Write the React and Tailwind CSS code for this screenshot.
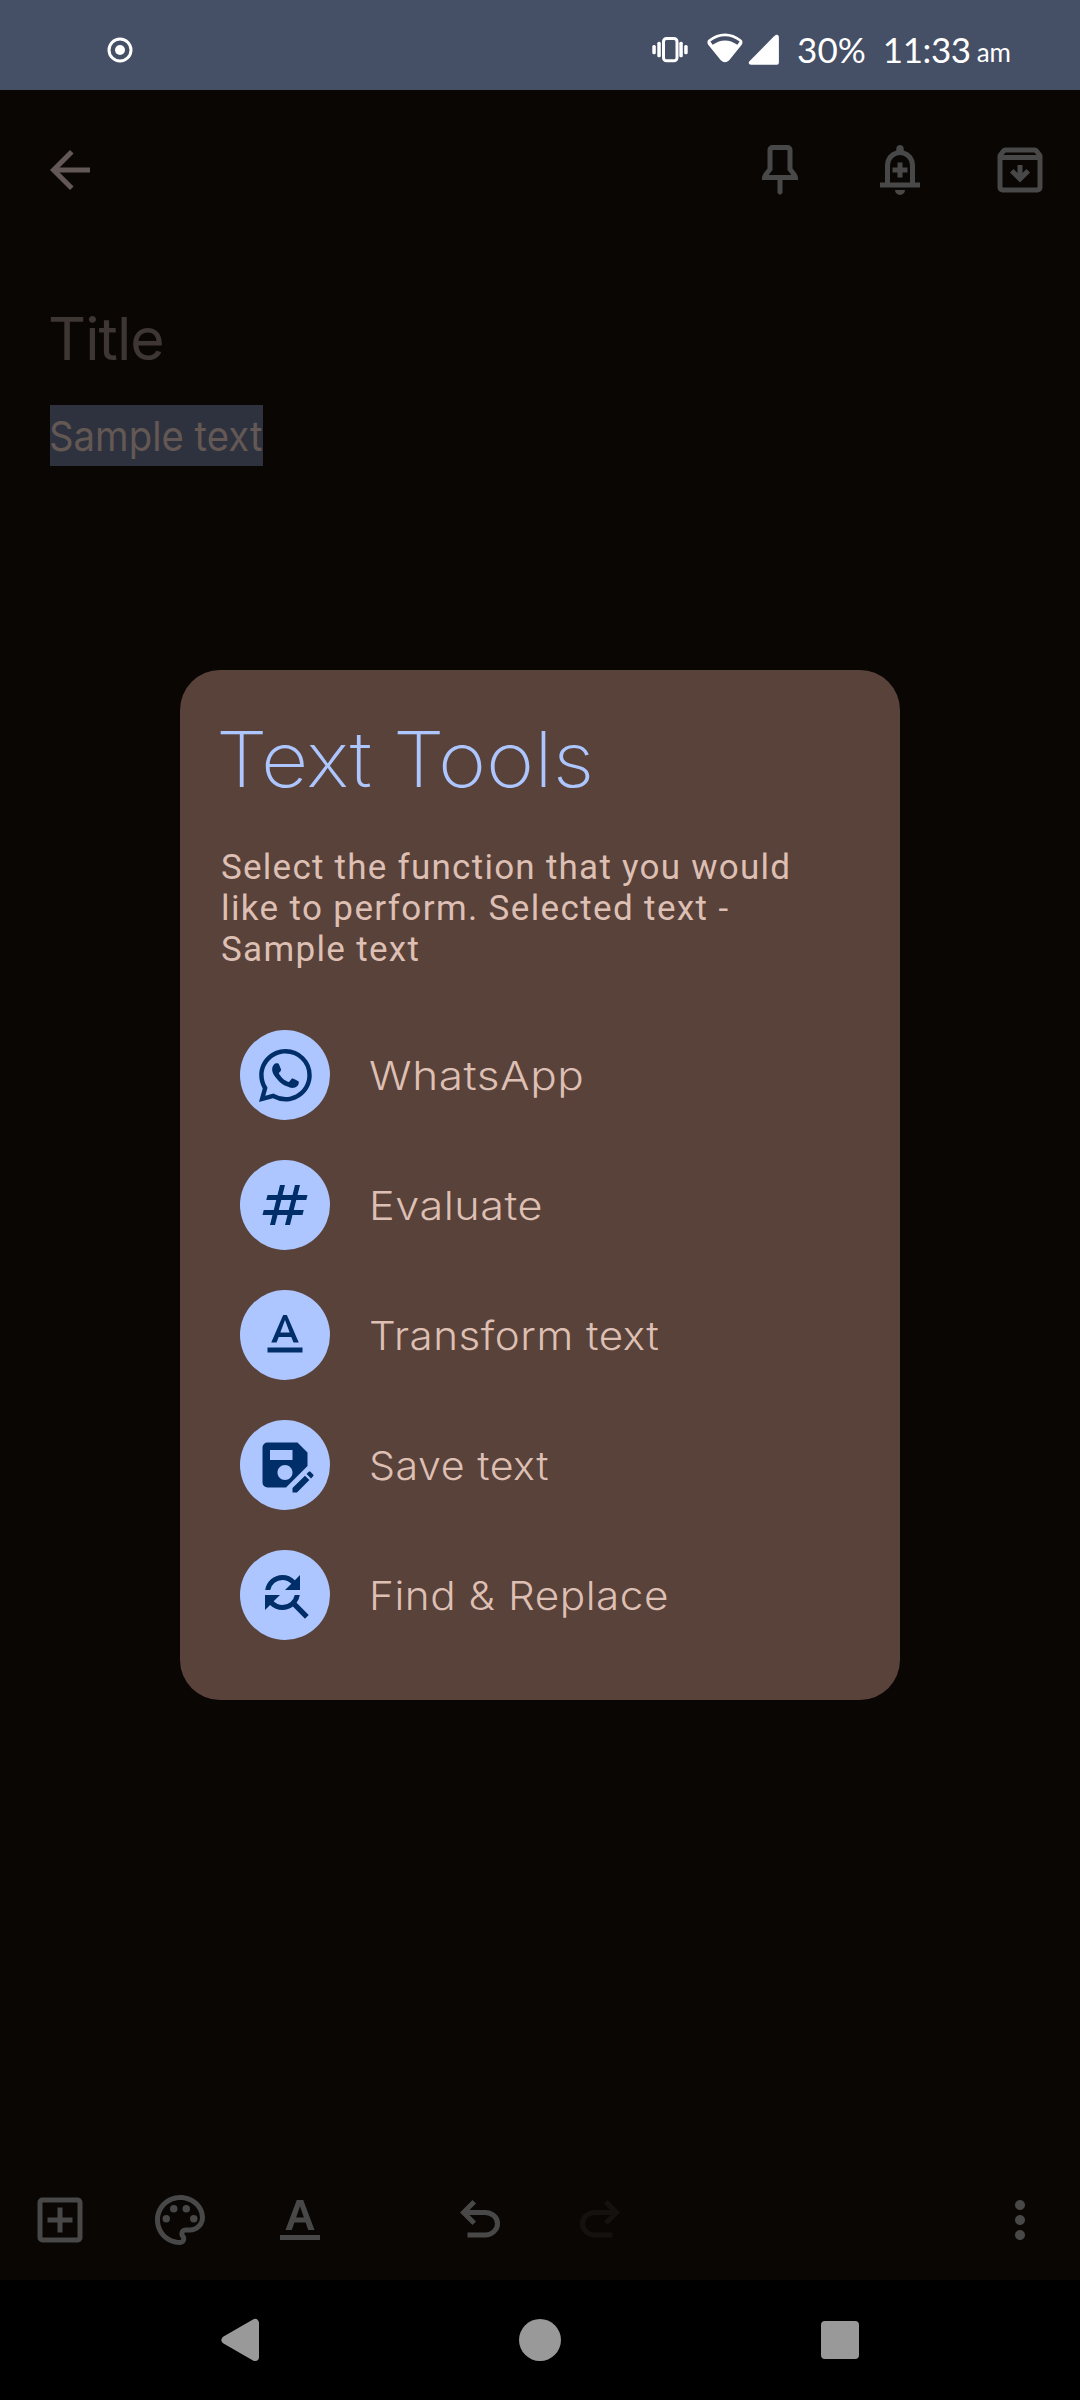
import React from 'react';
import { MdFindReplace, MdMoreVert, MdNumbers, MdOutlineAddBox, MdOutlinePalette, MdSaveAs, MdTextFormat } from 'react-icons/md';
import { BsWhatsapp } from 'react-icons/bs';

const PATHS = {
  back: 'm313-440 224 224-57 56-320-320 320-320 57 56-224 224h487v80H313Z',
  bell: 'M480-80q-33 0-56.5-23.5T400-160h160q0 33-23.5 56.5T480-80ZM160-200v-80h80v-280q0-83 50-147.5T420-792v-28q0-25 17.5-42.5T480-880q25 0 42.5 17.5T540-820v28q80 20 130 84.5T720-560v280h80v80H160Zm160-80h320v-280q0-66-47-113t-113-47q-66 0-113 47t-47 113v280Zm120-80h80v-80h80v-80h-80v-80h-80v80h-80v80h80v80Z',
  archive: 'm480-280 160-160-56-56-64 64v-128h-80v128l-64-64-56 56 160 160ZM200-640v440h560v-440H200Zm0 520q-33 0-56.5-23.5T120-200v-499q0-14 4.5-27t13.5-24l50-61q11-14 27.5-21.5T250-840h460q18 0 34.5 7.5T772-811l50 61q9 11 13.5 24t4.5 27v499q0 33-23.5 56.5T760-120H200Zm16-600h528l-34-40H250l-34 40Z',
  undo: 'M280-200v-80h284q63 0 109.5-40T720-420q0-60-46.5-100T564-560H312l104 104-56 56-200-200 200-200 56 56-104 104h252q97 0 169.5 63T800-420q0 94-72.5 157T564-200H280Z',
};

function Symbol({ name, className = '' }) {
  return (
    <svg viewBox="0 -960 960 960" fill="currentColor" className={`size-[60px] shrink-0 ${className}`}>
      <path d={PATHS[name]} />
    </svg>
  );
}

function PinIcon() {
  return (
    <svg viewBox="0 0 24 24" className="size-[60px] shrink-0" fill="none" stroke="currentColor" strokeWidth="2">
      <path d="M9 3h6a1 1 0 0 1 1 1v7.7l1.7 2.2q.5.6.5 1.1H5.8q0-.5.5-1.1L8 11.700V4a1 1 0 0 1 1-1Z" />
      <path d="M11 16h2v5.200l-1 .8-1-.8Z" fill="currentColor" stroke="none" />
    </svg>
  );
}

function TextColorIcon() {
  return (
    <svg viewBox="0 0 24 24" className="size-[60px] shrink-0" fill="currentColor" fillRule="evenodd">
      <path d="M4 18h16v2H4zM10.700 4h2.600l4.500 12h-2.500l-1.050-3h-4.500l-1.050 3H6.200zM10.450 11h3.100L12 6.500z" />
    </svg>
  );
}

function StatusBar() {
  return (
    <header className="flex h-[90px] items-center bg-[#454f66] pl-[107px] pr-[69px] text-white">
      <svg viewBox="0 0 26 26" className="mt-[10px] size-[26px]">
        <circle cx="13" cy="13" r="11" fill="none" stroke="currentColor" strokeWidth="3" />
        <circle cx="13" cy="13" r="5" fill="currentColor" />
      </svg>
      <svg viewBox="652 30 128 38" className="ml-auto mt-2 h-[38px] w-[128px]" fill="currentColor">
        <rect x="663.500" y="38.500" width="13.500" height="22.200" rx="3" fill="none" stroke="currentColor" strokeWidth="3" />
        <rect x="657.300" y="41.700" width="3.500" height="15.600" rx="1.500" />
        <rect x="652.300" y="45" width="3.500" height="9.200" rx="1.500" />
        <rect x="679.300" y="41.700" width="3.500" height="15.600" rx="1.500" />
        <rect x="684.200" y="45" width="3.500" height="9.200" rx="1.500" />
        <path d="M708.200 44.800c-1.300-1.800-1-4 .6-5.200 9.500-8.200 22.800-8.200 32.300 0 1.600 1.200 1.900 3.400.6 5.200l-12.500 15.400q-4.200 3.900-8.400 0z" />
        <path d="M711.500 43.200Q725 33.500 738.500 43.200" fill="none" stroke="#454f66" strokeWidth="4" />
        <path d="M776 34.800q2.900-.6 2.900 2.700v25.200q0 2.100-2.100 2.100h-25.600q-3.700-.5-2-3.300l24.600-25.100z" />
      </svg>
      <span className="ml-[17px] mt-[7px] font-[Lato] text-[35px] leading-[42px]">30%</span>
      <span className="ml-[17px] mt-[7px] font-[Lato] text-[35px] leading-[42px] tracking-[-0.4px]">11:33</span>
      <span className="ml-[6px] mt-[13px] font-[Lato] text-[26px] leading-[42px]">am</span>
    </header>
  );
}

const ACTIONS = [
  { label: 'WhatsApp', stretch: 'scale-x-[1.13]', icon: <BsWhatsapp className="size-[53px]" /> },
  { label: 'Evaluate', stretch: 'scale-x-[1.106]', icon: <MdNumbers className="size-[60px]" /> },
  { label: 'Transform text', stretch: 'scale-x-[1.079]', icon: <MdTextFormat className="size-[60px]" /> },
  { label: 'Save text', stretch: 'scale-x-[1.056]', icon: <MdSaveAs className="size-[60px]" /> },
  { label: 'Find & Replace', stretch: 'scale-x-[1.083]', icon: <MdFindReplace className="size-[60px]" /> },
];

function TextToolsDialog() {
  return (
    <section className="h-[1030px] w-[720px] rounded-[40px] bg-[#58423a] px-10 pt-[40px] text-[#debfb3]">
      <h2 className="-ml-[4px] w-fit origin-left scale-x-[1.067] whitespace-nowrap font-[Inter] text-[77px] font-[150] leading-[98px] [word-spacing:-2px] text-[#aec6ff]">Text Tools</h2>
      <p className="ml-px mt-[39px] whitespace-nowrap font-[Roboto] text-[35px] leading-[41px]">
        <span className="block tracking-[1.25px]">Select the function that you would</span>
        <span className="block tracking-[1.37px]">like to perform. Selected text -</span>
        <span className="block tracking-[1.32px]">Sample text</span>
      </p>
      <ul className="mt-[60px] flex flex-col gap-10 pl-5">
        {ACTIONS.map(({ label, stretch, icon }) => (
          <li key={label} className="flex h-[90px] items-center gap-[39px]">
            <span className="flex size-[90px] items-center justify-center rounded-full bg-[#aec6ff] text-[#002e69]">{icon}</span>
            <span className={`mt-[2px] origin-left whitespace-nowrap font-[Inter] text-[39px] font-[330] leading-[48px] tracking-[0.5px] ${stretch}`}>{label}</span>
          </li>
        ))}
      </ul>
    </section>
  );
}

export default function App() {
  return (
    <div className="flex h-[2400px] w-[1080px] flex-col overflow-hidden bg-black">
      <StatusBar />
      <main className="relative flex flex-1 flex-col bg-[#0a0603] text-[#484848]">
        <nav className="flex h-[160px] items-center gap-[60px] pl-10 pr-[30px]">
          <Symbol name="back" className="mr-auto text-[#635855]" />
          <PinIcon />
          <Symbol name="bell" />
          <Symbol name="archive" />
        </nav>
        <div className="flex flex-1 flex-col items-start px-[50px] pt-[53px]">
          <h1 className="-ml-[2px] font-[Inter] text-[59px] leading-[72px] tracking-[-0.9px] text-[#3e3633]">Title</h1>
          <p className="mt-[30px] h-[61px] w-[213px] bg-[#2e323e] text-[#645855]">
            <span className="-ml-px inline-block origin-left scale-x-[0.935] whitespace-nowrap font-[Inter] text-[41px] leading-[62px]">Sample text</span>
          </p>
        </div>
        <footer className="flex h-[120px] items-center gap-[60px] px-[30px]">
          <MdOutlineAddBox className="size-[60px]" />
          <MdOutlinePalette className="size-[60px]" />
          <TextColorIcon />
          <Symbol name="undo" className="ml-[60px]" />
          <Symbol name="undo" className="-scale-x-100 text-[#15110f]" />
          <MdMoreVert className="ml-auto size-[60px]" />
        </footer>
        <div className="absolute inset-0 flex items-center justify-center">
          <TextToolsDialog />
        </div>
      </main>
      <div className="flex h-[120px] items-center justify-between bg-black px-[210px] text-[#999]">
        <svg viewBox="0 0 60 60" className="size-[60px]" fill="currentColor" stroke="currentColor" strokeWidth="8" strokeLinejoin="round">
          <path d="M15.500 30 45 13v34z" />
        </svg>
        <span className="size-[42px] rounded-full bg-[#999]" />
        <span className="mx-[11px] size-[38px] rounded-[4px] bg-[#999]" />
      </div>
    </div>
  );
}
